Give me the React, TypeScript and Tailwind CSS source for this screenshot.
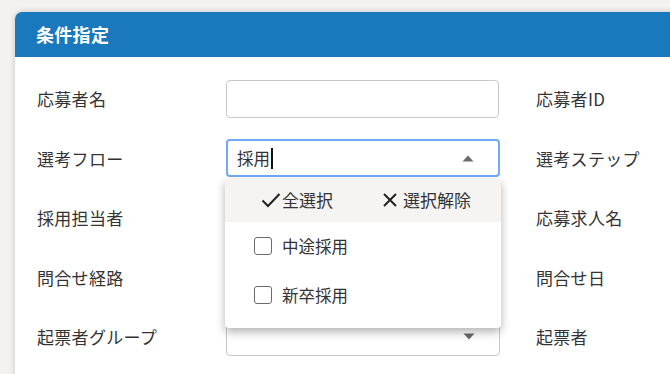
import React from "react";

const Label = ({ children }: { children: React.ReactNode }) => (
  <div className="text-[17px] tracking-[0.3px] text-[#333333] leading-none">{children}</div>
);

const TextInput = () => (
  <div className="h-[38px] w-[273px] rounded-[4px] border border-[#c9c9c9] bg-white" />
);

const Tri = ({ up }: { up?: boolean }) => (
  <svg width="12" height="7" viewBox="0 0 12 7" className="block">
    {up ? <path d="M6 0.5 L11.5 6.5 L0.5 6.5 Z" fill="#6b6b6b" /> : <path d="M0.5 0.5 L11.5 0.5 L6 6.5 Z" fill="#6b6b6b" />}
  </svg>
);

const Check = () => (
  <div className="h-[18px] w-[18px] rounded-[3px] border-[1.5px] border-[#6b6b6b] bg-white" />
);

export default function App() {
  const font = { fontFamily: '"Noto Sans CJK JP", "Noto Sans", sans-serif' };
  return (
    <div className="h-[374px] w-[670px] overflow-hidden bg-[#f3f2f1] pl-[15px] pt-[12px]" style={font}>
      <div className="w-[720px] h-[420px] rounded-t-[7px] bg-white shadow-[0_0_6px_rgba(0,0,0,0.18)]">
        <div className="flex h-[45px] items-center rounded-t-[7px] bg-[#1a78bd] pl-[21px] text-[18px] tracking-[0.3px] font-bold text-white">
          条件指定
        </div>
        <div className="grid grid-cols-[211px_310px_1fr] pt-[12px]">
          {/* Row 1 */}
          <div className="flex h-[59.5px] items-center pl-[22px]"><Label>応募者名</Label></div>
          <div className="flex h-[59.5px] items-center"><TextInput /></div>
          <div className="flex h-[59.5px] items-center"><Label>応募者ID</Label></div>

          {/* Row 2 */}
          <div className="flex h-[59.5px] items-center pl-[22px]"><Label>選考フロー</Label></div>
          <div className="relative flex h-[59.5px] items-center">
            <div className="flex h-[38px] w-[274px] items-center justify-between rounded-[4px] border-2 border-[#72a9f4] bg-white pl-[9px] pr-[24px]">
              <div className="flex items-center text-[16.5px] text-[#333333]">
                採用<span className="ml-[1px] inline-block h-[21px] w-[1.5px] bg-[#111]" />
              </div>
              <Tri up />
            </div>
            <div className="absolute left-[-1px] top-[50px] z-10 w-[276px] rounded-b-[4px] bg-white pb-[8px] shadow-[0_4px_10px_rgba(0,0,0,0.3)]">
              <div className="flex h-[43px] items-center bg-[#f5f4f2] text-[17px] text-[#333333]">
                <div className="flex items-center pl-[36px]">
                  <svg width="20" height="16" viewBox="0 0 20 16" className="mr-[1px]">
                    <path d="M1.5 8.5 L7 14 L18.5 2" fill="none" stroke="#222" strokeWidth="2" />
                  </svg>
                  全選択
                </div>
                <div className="ml-[49px] flex items-center">
                  <svg width="16" height="16" viewBox="0 0 16 16" className="mr-[5px]">
                    <path d="M2 2 L14 14 M14 2 L2 14" fill="none" stroke="#222" strokeWidth="2" />
                  </svg>
                  選択解除
                </div>
              </div>
              <div className="flex h-[49px] items-center pl-[29px] text-[16.5px] text-[#333333]">
                <Check />
                <span className="ml-[10px]">中途採用</span>
              </div>
              <div className="flex h-[49px] items-center pl-[29px] text-[16.5px] text-[#333333]">
                <Check />
                <span className="ml-[10px]">新卒採用</span>
              </div>
            </div>
          </div>
          <div className="flex h-[59.5px] items-center"><Label>選考ステップ</Label></div>

          {/* Row 3 */}
          <div className="flex h-[59.5px] items-center pl-[22px]"><Label>採用担当者</Label></div>
          <div className="flex h-[59.5px] items-center"><TextInput /></div>
          <div className="flex h-[59.5px] items-center"><Label>応募求人名</Label></div>

          {/* Row 4 */}
          <div className="flex h-[59.5px] items-center pl-[22px]"><Label>問合せ経路</Label></div>
          <div className="flex h-[59.5px] items-center"><TextInput /></div>
          <div className="flex h-[59.5px] items-center"><Label>問合せ日</Label></div>

          {/* Row 5 */}
          <div className="flex h-[59.5px] items-center pl-[22px]"><Label>起票者グループ</Label></div>
          <div className="flex h-[59.5px] items-center">
            <div className="flex h-[38px] w-[274px] items-center justify-end rounded-[4px] border border-[#c9c9c9] bg-white pr-[24px]">
              <Tri />
            </div>
          </div>
          <div className="flex h-[59.5px] items-center"><Label>起票者</Label></div>
        </div>
      </div>
    </div>
  );
}
